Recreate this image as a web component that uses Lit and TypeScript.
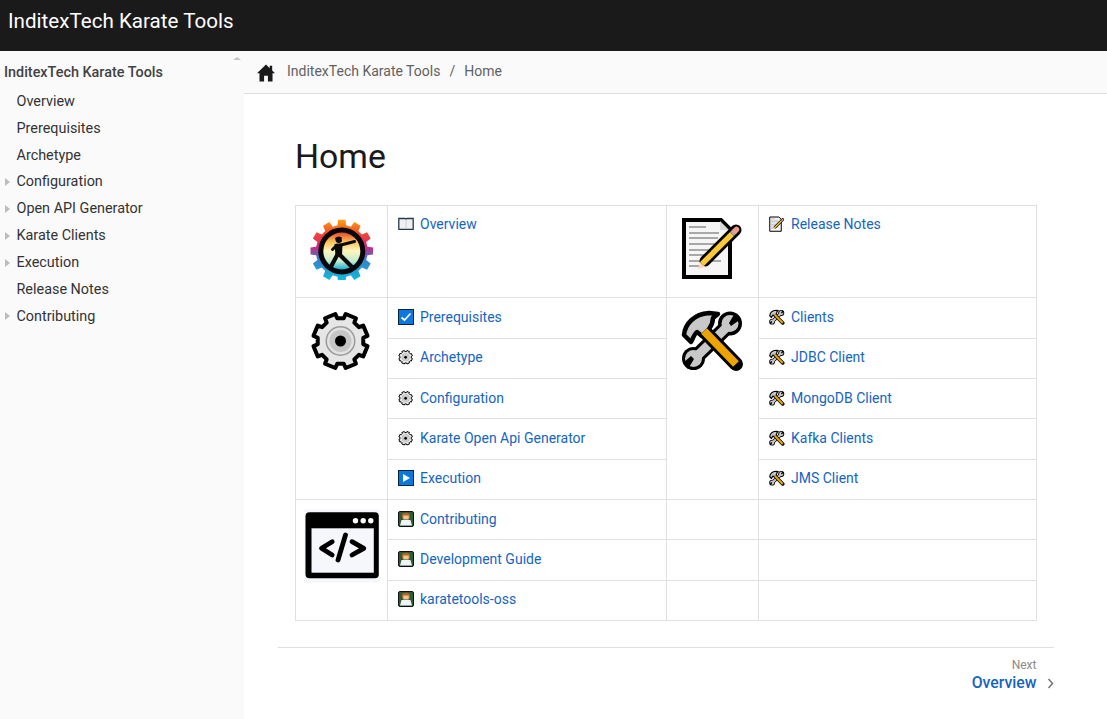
import { LitElement, html, css, svg } from "lit";
import { customElement } from "lit/decorators.js";

function gearPath(cx: number, cy: number, ro: number, ri: number, n: number, start = 0, w = 0.22): string {
  const pts: string[] = [];
  const step = (Math.PI * 2) / n;
  const p = (r: number, a: number) => `${(cx + r * Math.sin(a)).toFixed(2)} ${(cy - r * Math.cos(a)).toFixed(2)}`;
  for (let i = 0; i < n; i++) {
    const a = start + i * step;
    pts.push((i === 0 ? "M" : "L") + p(ro, a - step * w));
    pts.push("L" + p(ro, a + step * w));
    pts.push("L" + p(ri, a + step * 0.32));
    pts.push("L" + p(ri, a + step * 0.68));
  }
  return pts.join(" ") + "Z";
}

const logo = html`<svg class="big" viewBox="0 0 64 64">
  <defs>
    <linearGradient id="lg1" x1="0" y1="0" x2="0" y2="1">
      <stop offset="0" stop-color="#fca311" /><stop offset=".22" stop-color="#f5462e" /><stop offset=".45" stop-color="#c92a86" />
      <stop offset=".62" stop-color="#3a7cc8" /><stop offset="1" stop-color="#0cc0e0" />
    </linearGradient>
    <linearGradient id="lg2" x1="0" y1="0" x2="0" y2="1">
      <stop offset="0" stop-color="#e9472c" /><stop offset=".25" stop-color="#fbc25a" /><stop offset=".5" stop-color="#fff6bf" />
      <stop offset=".78" stop-color="#bfeccf" /><stop offset="1" stop-color="#14add6" />
    </linearGradient>
  </defs>
  <path d=${gearPath(31.8, 35, 31.5, 26, 12)} fill="url(#lg1)" />
  <circle cx="31.8" cy="35" r="23.500" fill="#08080c" />
  <circle cx="31.8" cy="35" r="18.500" fill="url(#lg2)" />
  <path d="M25 22L28 20.500L31.500 21L32 25.500L29 27.500L26 26Z" fill="#0a0a0a" />
  <path d="M29 29.500L44.500 25.500M27 29L22.500 33.500" fill="none" stroke="#0a0a0a" stroke-width="3" stroke-linecap="round" />
  <path d="M24.500 28L32.500 27.500L32 40L25.500 40Z" fill="#0a0a0a" />
  <path d="M27.500 38.500L21 50.500M29.500 38.500L41.500 50.500" fill="none" stroke="#0a0a0a" stroke-width="4.200" stroke-linecap="round" />
</svg>`;

const noteBody = svg`
  <path d="M3 4H40L49 13V61H3Z" fill="#f6f6f6" stroke="#000" stroke-width="4" stroke-linejoin="miter" />
  <path d="M39 5V14H48Z" fill="#d8d8d8" />
  <g stroke="#a8a8a8" stroke-width="2">
    <path d="M8 11H25M8 17H38M8 22H37M8 28H42M8 34H35M8 39H30M8 45H40M8 50H18" />
  </g>
  <path d="M24 45L55 14" stroke="#000" stroke-width="11" stroke-linecap="round" />
  <path d="M21 48L51 18" stroke="#fcc838" stroke-width="5.500" />
  <path d="M51 18L54 15" stroke="#aaa" stroke-width="5.500" />
  <path d="M54 15L55.500 13.500" stroke="#ee9a8a" stroke-width="5.500" stroke-linecap="round" />
  <path d="M17 53L19 46L24 51Z" fill="#f7d8b8" />
`;

const gearBody = svg`
  <path d=${gearPath(30.500, 33, 27.500, 23, 8, Math.PI / 8, 0.26)} fill="#e6e6e6" stroke="#000" stroke-width="4" stroke-linejoin="round" />
  <circle cx="30.500" cy="33" r="15" fill="#9a9a9a" />
  <circle cx="30.500" cy="33" r="13.500" fill="#e2e2e2" />
  <circle cx="30.500" cy="33" r="11" fill="#c6c6c6" />
  <circle cx="30.500" cy="33" r="5.500" fill="#000" />
`;

const toolsBody = svg`
  <path d="M12 52L49 16" stroke="#000" stroke-width="15" stroke-linecap="round" />
  <circle cx="49" cy="15.500" r="12" fill="#000" />
  <circle cx="12.500" cy="50.500" r="11.500" fill="#000" />
  <path d="M12 52L49 16" stroke="#c8c8c8" stroke-width="9" stroke-linecap="round" />
  <circle cx="49" cy="15.500" r="8.500" fill="#c8c8c8" />
  <circle cx="12.500" cy="50.500" r="8.500" fill="#c8c8c8" />
  <path d="M48 15L54 5L60 11L50 18Z" fill="#000" />
  <path d="M13 51L7 61L2 55L10 48Z" fill="#000" />
  <path d="M24 24L55 56" stroke="#000" stroke-width="14" stroke-linecap="round" />
  <path d="M3 27C4 16 13 6 28 5L37 6L32 10C32 13 31 17 28 21L21 28L16 24C13 26 11 33 10 34Z" fill="#c8c8c8" stroke="#000" stroke-width="4.500" stroke-linejoin="round" />
  <path d="M23 23L55 56" stroke="#eea400" stroke-width="8" />
`;

const big = (b: unknown) => html`<svg class="big" viewBox="0 0 64 64">${b}</svg>`;
const small = (b: unknown) => html`<svg class="ic" viewBox="0 0 64 64">${b}</svg>`;

const devBig = html`<svg class="dev" viewBox="0 0 76 76">
  <rect x=".5" y="1.300" width="75" height="73.400" fill="#f6f7fd" />
  <rect x="1.500" y="4.300" width="73.300" height="66" rx="4" fill="#000" />
  <rect x="7.500" y="20.300" width="62.300" height="44.400" fill="#f6f7fd" />
  <circle cx="51.500" cy="12.700" r="2.700" fill="#fff" /><circle cx="59.200" cy="12.700" r="2.700" fill="#fff" /><circle cx="66.800" cy="12.700" r="2.700" fill="#fff" />
  <path d="M28.200 33.700L17.500 40.300L28.200 47M48 33.700L59.800 40.300L48 47M41.500 27L34 52" fill="none" stroke="#000" stroke-width="4.800" stroke-linecap="round" stroke-linejoin="round" />
</svg>`;

const book = html`<svg class="ic" viewBox="0 0 16 16">
  <path d="M.8 2.500H7Q8 2.500 8 3.500Q8 2.500 9 2.500H15.200V13.300H.8Z" fill="#eef0f3" stroke="#24384e" stroke-width="1.300" />
  <path d="M8 3.500V12.500" stroke="#c0c6cc" stroke-width=".8" />
</svg>`;
const check = html`<svg class="ic" viewBox="0 0 16 16">
  <rect x=".5" y=".5" width="15" height="15" fill="#0a78de" stroke="#0c2238" />
  <path d="M3.500 8.500L6.500 11L12.500 4.500" fill="none" stroke="#fff" stroke-width="1.700" />
</svg>`;
const play = html`<svg class="ic" viewBox="0 0 16 16">
  <rect x=".5" y=".5" width="15" height="15" fill="#0a78de" stroke="#0c2238" />
  <path d="M5 4L12 8L5 12Z" fill="#fff" />
</svg>`;
const coder = html`<svg class="ic" viewBox="0 0 16 16">
  <rect x=".5" y=".5" width="15" height="15" rx="1.500" fill="#2c5c34" stroke="#111" />
  <path d="M4 7.500V3Q8 .5 12 3V7.500Z" fill="#b0652a" />
  <rect x="5.300" y="4.500" width="5.400" height="4" fill="#f6c48c" />
  <path d="M2 14.500L3.500 9H12.500L14 14.500Z" fill="#f0f4f8" />
</svg>`;
const home = html`<svg class="home" viewBox="0 0 16 16">
  <path d="M8 .5L0 8.200H2.200V15.500H6.300V10.500H9.700V15.500H13.800V8.200H16L13.500 5.800V1.500H11.300V3.700Z" fill="#1a1a1a" />
</svg>`;

const navItems: [string, boolean][] = [
  ["Overview", false], ["Prerequisites", false], ["Archetype", false], ["Configuration", true],
  ["Open API Generator", true], ["Karate Clients", true], ["Execution", true], ["Release Notes", false], ["Contributing", true],
];

const link = (ic: unknown, t: string) => html`<td class="lk"><span class="row">${ic}<a href="#">${t}</a></span></td>`;

@customElement("app-root")
export class AppRoot extends LitElement {
  static styles = css`
    :host { display: flex; flex-direction: column; height: 719px; overflow: hidden; font-family: Roboto, "Liberation Sans", sans-serif; background: #fff; color: #212121; }
    header { height: 51px; flex: none; background: #1a1a1a; color: #fff; font-size: 20.600px; line-height: 43px; padding-left: 8px; box-sizing: border-box; }
    .main { display: flex; flex: 1; min-height: 0; }
    aside { width: 244px; flex: none; background: #fafafa; position: relative; padding: 9px 0 0 4px; box-sizing: border-box; }
    .scroll { position: absolute; right: 3px; top: 6px; width: 0; height: 0; border: 4px solid transparent; border-top: 0; border-bottom: 3px solid #c4c4c4; }
    .nav-title { font-size: 14.400px; font-weight: 500; color: #424242; line-height: 26px; margin-bottom: 1.850px; }
    .nav-item { display: flex; align-items: center; height: 26.900px; font-size: 14.400px; color: #333; padding-left: 12.500px; position: relative; }
    .tri { position: absolute; left: 1px; top: 50%; margin-top: -4px; width: 0; height: 0; border-left: 5px solid #bdbdbd; border-top: 4px solid transparent; border-bottom: 4px solid transparent; }
    .content { flex: 1; min-width: 0; }
    .crumbs { height: 43px; box-sizing: border-box; background: #fafafa; border-bottom: 1px solid #e0e0e0; display: flex; align-items: center; padding-left: 13px; padding-bottom: 2px; font-size: 14px; color: #616161; }
    .home { width: 18px; height: 18px; margin-right: 12px; margin-top: 4px; }
    .sep { margin: 0 9px; }
    article { margin: 0 53px 0 34px; }
    .inner { padding: 0 17px; }
    h1 { margin: 0; padding-top: 41px; font-size: 33.750px; line-height: 44px; font-weight: 400; color: #1a1a1a; height: 70px; }
    table { border-collapse: collapse; width: 741px; table-layout: fixed; font-size: 14px; }
    td { border: 1px solid #e0e0e0; padding: 0; box-sizing: border-box; vertical-align: top; }
    .c1 { width: 92px; }
    .c2 { width: 279px; }
    .c3 { width: 92px; }
    .c4 { width: 278px; }
    .imgc { text-align: center; }
    .big { display: block; width: 64px; height: 64px; margin: 10px auto 0; }
    .dev { display: block; width: 76px; height: 76px; margin: 8px auto 0; }
    .ic { width: 16px; height: 16px; flex: none; margin-right: 6px; }
    .row { display: flex; align-items: center; padding: 9.650px 10px 0; line-height: 18px; }
    .top .row { padding-top: 9px; }
    a { color: #1565c0; text-decoration: none; }
    .h92 { height: 92px; }
    .h41 { height: 40.670px; }
    .h40 { height: 40.330px; }
    footer { border-top: 1px solid #e0e0e0; margin-top: 26px; display: flex; justify-content: flex-end; align-items: flex-start; height: 50px; }
    .pager { text-align: right; padding-top: 10px; }
    .next { font-size: 12px; line-height: 15px; color: #8a8a8a; }
    .title { font-size: 15.800px; line-height: 20px; font-weight: 500; color: #1565c0; }
    .chev { width: 7px; height: 11px; margin-left: 10.500px; margin-top: 30px; }
  `;

  render() {
    return html`
      <header>InditexTech Karate Tools</header>
      <div class="main">
        <aside>
          <div class="scroll"></div>
          <div class="nav-title">InditexTech Karate Tools</div>
          ${navItems.map(([t, c]) => html`<div class="nav-item">${c ? html`<span class="tri"></span>` : ""}${t}</div>`)}
        </aside>
        <div class="content">
          <div class="crumbs">${home}<span>InditexTech Karate Tools</span><span class="sep">/</span><span>Home</span></div>
          <article>
            <div class="inner">
              <h1>Home</h1>
              <table>
                <colgroup><col class="c1" /><col class="c2" /><col class="c3" /><col class="c4" /></colgroup>
                <tr class="h92 top">
                  <td class="imgc">${logo}</td>${link(book, "Overview")}
                  <td class="imgc">${big(noteBody)}</td>${link(small(noteBody), "Release Notes")}
                </tr>
                <tr class="h41">
                  <td class="imgc" rowspan="5">${big(gearBody)}</td>${link(check, "Prerequisites")}
                  <td class="imgc" rowspan="5">${big(toolsBody)}</td>${link(small(toolsBody), "Clients")}
                </tr>
                <tr class="h40">${link(small(gearBody), "Archetype")}${link(small(toolsBody), "JDBC Client")}</tr>
                <tr class="h40">${link(small(gearBody), "Configuration")}${link(small(toolsBody), "MongoDB Client")}</tr>
                <tr class="h40">${link(small(gearBody), "Karate Open Api Generator")}${link(small(toolsBody), "Kafka Clients")}</tr>
                <tr class="h40">${link(play, "Execution")}${link(small(toolsBody), "JMS Client")}</tr>
                <tr class="h40">
                  <td class="imgc" rowspan="3">${devBig}</td>${link(coder, "Contributing")}<td></td><td></td>
                </tr>
                <tr class="h40">${link(coder, "Development Guide")}<td></td><td></td></tr>
                <tr class="h40">${link(coder, "karatetools-oss")}<td></td><td></td></tr>
              </table>
            </div>
            <footer>
              <div class="pager"><div class="next">Next</div><div class="title">Overview</div></div>
              <svg class="chev" viewBox="0 0 7 11"><path d="M1.500 1L5.500 5.500L1.500 10" fill="none" stroke="#757575" stroke-width="1.500" /></svg>
            </footer>
          </article>
        </div>
      </div>
    `;
  }
}
